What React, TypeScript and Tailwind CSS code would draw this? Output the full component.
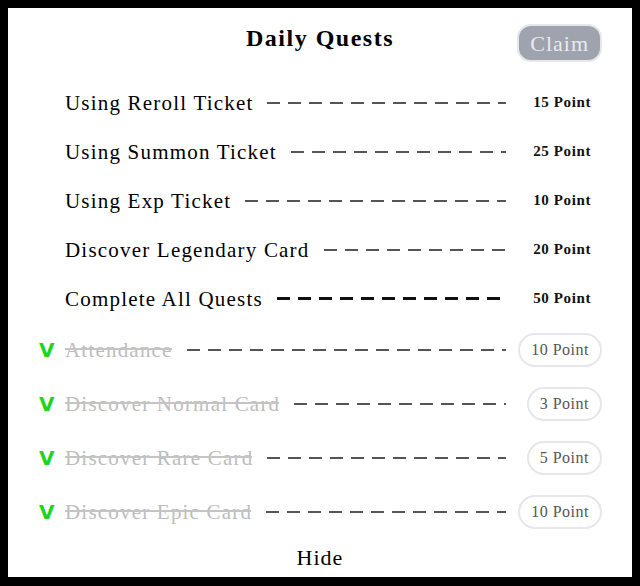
import React from 'react';

type Quest = {
  title: string;
  points: number;
  done?: boolean;
  bold?: boolean;
};

const quests: Quest[] = [
  { title: 'Using Reroll Ticket', points: 15 },
  { title: 'Using Summon Ticket', points: 25 },
  { title: 'Using Exp Ticket', points: 10 },
  { title: 'Discover Legendary Card', points: 20 },
  { title: 'Complete All Quests', points: 50, bold: true },
  { title: 'Attendance', points: 10, done: true },
  { title: 'Discover Normal Card', points: 3, done: true },
  { title: 'Discover Rare Card', points: 5, done: true },
  { title: 'Discover Epic Card', points: 10, done: true },
];

const serif = "font-['Liberation_Serif',serif]";

const QuestRow = ({ quest }: { quest: Quest }) => {
  const { title, points, done, bold } = quest;
  return (
    <div className={`flex items-center pr-[30px] ${done ? 'h-[54px] pl-[31px]' : 'h-[49px] pl-[57px]'}`}>
      {done && (
        <span className="w-[26px] text-[20px] font-bold text-[#1fd41f] font-['DejaVu_Sans',sans-serif] leading-none">
          V
        </span>
      )}
      <span
        className={`relative text-[21px] tracking-[1.2px] whitespace-nowrap leading-[28px] ${
          done
            ? "text-[#bdbdbd] after:content-[''] after:absolute after:left-0 after:right-[1px] after:top-[12px] after:h-[1.5px] after:bg-[#c4c4c4]"
            : 'text-black'
        }`}
      >
        {title}
      </span>
      <div
        className={`flex-1 ml-[14px] mr-[6px] ${
          bold
            ? 'h-[3px] bg-[repeating-linear-gradient(90deg,#111_0_13px,transparent_13px_21px)]'
            : 'h-[2px] bg-[repeating-linear-gradient(90deg,#555_0_13px,transparent_13px_21px)]'
        }`}
      />
      <div className="w-[90px] flex justify-end">
        <span
          className={`rounded-full border-2 h-[34px] flex items-center whitespace-nowrap ${
            done
              ? 'border-[#e5e7eb] text-[#555] text-[16px] tracking-[0.5px] px-[11px]'
              : 'border-transparent text-[#111] font-bold text-[15px] tracking-[0.6px] px-[9px]'
          }`}
        >
          {points} Point
        </span>
      </div>
    </div>
  );
};

export default function App() {
  return (
    <div className="w-[640px] h-[586px] bg-black pt-[8px] pl-[8px] pr-[8px] pb-[9px]">
      <div className={`h-full bg-white flex flex-col ${serif}`}>
        <div className="h-[70px] grid grid-cols-[1fr_auto_1fr] items-start pt-[14px] px-[30px]">
          <div />
          <h1 className="text-[24px] tracking-[1.5px] font-bold leading-[32px] text-black">Daily Quests</h1>
          <div className="flex justify-end pt-[2px]">
            <button className="h-[38px] px-[11px] rounded-[14px] bg-[#9ea3ae] border-2 border-[#e5e7eb] text-[22px] tracking-[1px] text-[#e9ebef]">
              Claim
            </button>
          </div>
        </div>
        {quests.map((q) => (
          <QuestRow key={q.title} quest={q} />
        ))}
        <div className="h-[36px] flex items-center justify-center text-[22px] tracking-[1px] text-black">Hide</div>
      </div>
    </div>
  );
}
